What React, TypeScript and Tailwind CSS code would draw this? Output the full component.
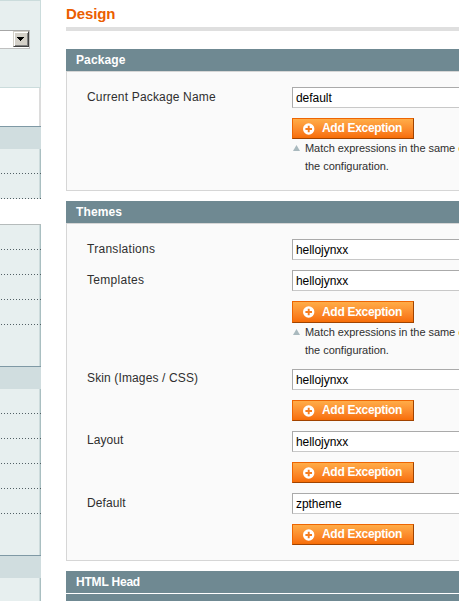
import React from "react";

function Dotted() {
  return (
    <div className="-mr-[2px] h-[25px] flex-none bg-[repeating-linear-gradient(90deg,transparent_0_1px,#526065_1px_2px,transparent_2px_3px)] bg-[length:100%_1px] bg-bottom bg-no-repeat" />
  );
}

function Band() {
  return <div className="-mr-[2px] h-[23px] flex-none border-t border-[#7f99a5] bg-[#d0dddf]" />;
}

function Sidebar() {
  return (
    <div className="flex h-[601px] w-[41px] flex-none flex-col overflow-hidden">
      <div className="h-[88px] flex-none border-y border-r border-[#cbdcdc] bg-[#e7efef] pt-[29px]">
        <div className="flex h-[19px] w-[30px] justify-end border-y border-r border-[#c0c0c0] border-t-[#a6a6a6] bg-white">
          <div className="flex h-4 w-4 items-center justify-center border border-[#404040] border-l-[#d4d0c8] border-t-[#d4d0c8] bg-[#d4d0c8] shadow-[inset_1px_1px_0_#ffffff,inset_-1px_-1px_0_#808080]">
            <svg className="mr-px" width="7" height="4" viewBox="0 0 7 4" shapeRendering="crispEdges">
              <path d="M0 0h7v1H6v1H5v1H4v1H3V3H2V2H1V1H0z" fill="#000" />
            </svg>
          </div>
        </div>
      </div>
      <div className="h-[38px] flex-none border-r-2 border-[#dcdcdc] bg-white" />
      <div className="flex h-[73px] flex-none flex-col border-r border-[#a9bfc1] bg-[#e7efef] pr-px shadow-[inset_-1px_0_0_#cddbdc]">
        <Band />
        <Dotted />
        <Dotted />
      </div>
      <div className="h-[25px] flex-none" />
      <div className="flex h-[377px] flex-none flex-col border-r border-[#a9bfc1] bg-[#e7efef] pr-px shadow-[inset_-1px_0_0_#cddbdc]">
        <div className="-mr-[2px] h-px flex-none bg-[#b5bbbb]" />
        <Dotted />
        <Dotted />
        <Dotted />
        <Dotted />
        <div className="h-[41px] flex-none" />
        <Band />
        <Dotted />
        <Dotted />
        <Dotted />
        <Dotted />
        <Dotted />
        <div className="h-[41px] flex-none" />
        <Band />
      </div>
    </div>
  );
}

function AddButton({ tall }: { tall?: boolean }) {
  return (
    <button
      className={`${tall ? "h-[22px]" : "h-[21px]"} mt-[10px] flex w-[122px] flex-none items-center border border-[#ed6502] border-b-[#a04300] border-r-[#a04300] bg-gradient-to-b from-[#ffac47] to-[#f76d05] pl-[10px] text-left text-[12px] font-bold leading-[19px] tracking-[-0.3px] text-white`}
    >
      <svg className="mr-[7px] flex-none" width="12" height="12" viewBox="0 0 12 12">
        <circle cx="5.7" cy="6" r="5.7" fill="#fff" />
        <path d="M5.7 2.7v6.6M2.4 6h6.6" stroke="#f57c1f" strokeWidth="1.9" />
      </svg>
      Add Exception
    </button>
  );
}

function Note() {
  return (
    <div className="flex text-[11px] leading-[18px] text-[#2f2f2f]">
      <svg className="ml-[1px] mr-[5px] mt-[6px] flex-none" width="7" height="6" viewBox="0 0 7 6">
        <path d="M3.5 0 7 6H0z" fill="#a9b9be" />
      </svg>
      <div>
        <div className="tracking-[-0.05px]">
          Match expressions in the same <span className="text-[#eb5e00]">o</span>
        </div>
        <div className="tracking-[-0.03px]">the configuration.</div>
      </div>
    </div>
  );
}

interface FieldProps {
  label: string;
  tracking: string;
  value: string;
  height: string;
  labelLeading?: string;
  exception?: boolean;
  note?: boolean;
  tall?: boolean;
}

function Field({ label, tracking, value, height, labelLeading = "leading-5", exception, note, tall }: FieldProps) {
  return (
    <div className={`${height} flex flex-none`}>
      <label className={`${tracking} ${labelLeading} w-[205px] flex-none text-[12px] text-[#2f2f2f]`}>{label}</label>
      <div className="flex w-[200px] flex-none flex-col">
        <div className="h-[21px] flex-none border border-[#aaaaaa] border-b-[#c8c8c8] bg-white pl-[3px] text-[12px] leading-5 tracking-[-0.05px] text-black">
          {value}
        </div>
        {exception && <AddButton tall={tall} />}
        {note && <Note />}
      </div>
    </div>
  );
}

function Header({ children, tracking = "tracking-[0.12px]" }: { children?: React.ReactNode; tracking?: string }) {
  return (
    <div
      className={`${tracking} h-[22px] flex-none whitespace-nowrap bg-[#6f8992] pl-[10px] text-[12px] font-bold leading-[23px] text-white`}
    >
      {children}
    </div>
  );
}

export default function App() {
  return (
    <div className="flex h-[601px] w-[459px] overflow-hidden whitespace-nowrap bg-white font-['Liberation_Sans',Arial,sans-serif]">
      <Sidebar />
      <div className="ml-[25px] flex w-[393px] flex-none flex-col overflow-hidden">
        <div className="h-[31px] flex-none border-b-4 border-[#dfdfdf] pt-[4px] text-[15px] font-bold leading-5 tracking-[-0.12px] text-[#eb5e00]">
          Design
        </div>
        <div className="h-[18px] flex-none" />
        <Header>Package</Header>
        <div className="flex h-[120px] w-[500px] flex-none flex-col border border-[#d6d6d6] bg-[#fafafa] pl-5 pt-[15px]">
          <Field label="Current Package Name" tracking="tracking-[0.17px]" value="default" height="h-[88px]" exception note />
        </div>
        <div className="h-[10px] flex-none" />
        <Header>Themes</Header>
        <div className="flex h-[338px] w-[500px] flex-none flex-col border border-[#d6d6d6] bg-[#fafafa] pl-5 pt-[15px]">
          <Field label="Translations" tracking="tracking-[0.28px]" value="hellojynxx" height="h-[31px]" />
          <Field label="Templates" tracking="tracking-[0.3px]" value="hellojynxx" height="h-[99px]" exception note tall />
          <Field label="Skin (Images / CSS)" tracking="tracking-[0.13px]" labelLeading="leading-[18px]" value="hellojynxx" height="h-[62px]" exception />
          <Field label="Layout" tracking="tracking-[0.05px]" labelLeading="leading-[18px]" value="hellojynxx" height="h-[62px]" exception />
          <Field label="Default" tracking="tracking-[0.1px]" value="zptheme" height="h-[52px]" exception />
        </div>
        <div className="h-[10px] flex-none" />
        <Header tracking="tracking-[-0.2px]">HTML Head</Header>
        <div className="h-px flex-none" />
        <Header />
      </div>
    </div>
  );
}
